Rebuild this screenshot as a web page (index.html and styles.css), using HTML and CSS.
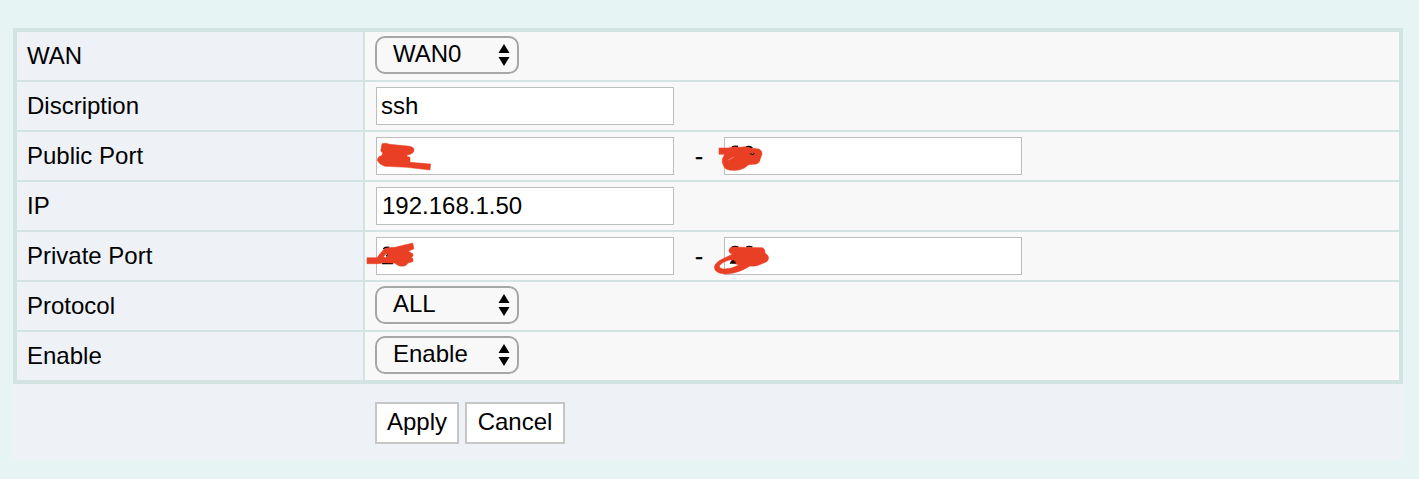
FILE: index.html
```html
<!DOCTYPE html>
<html lang="en">
<head>
<meta charset="utf-8">
<title>Port Forwarding</title>
<link rel="stylesheet" href="styles.css">
</head>
<body>
<form class="panel">
  <div class="grid">
    <div class="label">WAN</div>
    <div class="value"><button type="button" class="select">WAN0<svg class="arrows" width="12" height="22" viewBox="0 0 12 22"><path d="M6 0L11.5 9H.5zM6 22L.5 13h11z"/></svg></button></div>

    <div class="label">Discription</div>
    <div class="value"><div class="field"><input type="text" value="ssh"></div></div>

    <div class="label">Public Port</div>
    <div class="value">
      <div class="field"><input type="text" aria-label="Public port start">
        <svg class="scribble" width="110" height="60" viewBox="0 0 330 180"><path class="ink" d="M66 41Q75 38 90 43L150 49Q163 52 162 62Q158 73 141 75L142 80L150 81V97L212 102L210 120L140 112L75 109Q58 104 52 91Q51 81 66 76L68 68Q60 65 63 57Z"/></svg>
      </div>
      <span class="dash">-</span>
      <div class="field"><input type="text" aria-label="Public port end">
        <svg class="scribble" width="110" height="60" viewBox="0 0 330 180"><path class="dark" d="M126 51Q134 47 144 50M168 51Q178 48 187 54"/><path class="ink" d="M87 54H115Q133 48 150 52Q168 47 180 54L207 57Q217 62 216 73L211 86Q210 98 199 102L176 104L163 114Q147 123 127 121Q106 121 101 108Q94 97 97 87L104 73H87Z"/><path class="dark-fill" d="M178 71L188 69L194 71L187 76Z"/><path class="glint" d="M184 72L189 70M115 90L132 81"/></svg>
      </div>
    </div>

    <div class="label">IP</div>
    <div class="value"><div class="field"><input type="text" class="address" value="192.168.1.50"></div></div>

    <div class="label">Private Port</div>
    <div class="value">
      <div class="field"><input type="text" aria-label="Private port start">
        <svg class="scribble" width="110" height="60" viewBox="0 0 330 180"><path class="dark" d="M70 57Q76 50 88 53M66 100H99"/><path class="ink" d="M21 83H51L66 64Q73 54 84 53L105 52L158 39L162 56L145 64L158 71Q162 77 155 82Q162 88 158 95L144 99Q139 109 126 109Q113 109 106 100L70 98L58 101H21Z"/><path class="hole" d="M71 81L79 71L84 75L78 82Z"/><path class="dark-fill" d="M77 77L82 71L84 75L79 80Z"/></svg>
      </div>
      <span class="dash">-</span>
      <div class="field"><input type="text" aria-label="Private port end">
        <svg class="scribble" width="110" height="60" viewBox="0 0 330 180"><path class="dark" d="M126 51Q135 48 145 51M169 51Q178 48 187 51"/><path class="ink" fill-rule="evenodd" d="M123 51L218 53Q226 57 225 68L234 77Q239 88 230 95L207 105Q194 110 180 108Q153 125 127 130Q94 136 79 124Q69 115 76 103Q85 91 105 83L127 73Q113 68 118 57ZM122 89Q94 96 88 108Q89 117 103 117Q126 116 147 105L136 101Z"/><path class="dark-fill" d="M119 101L122 94L130 90L137 96V101Z"/></svg>
      </div>
    </div>

    <div class="label">Protocol</div>
    <div class="value"><button type="button" class="select">ALL<svg class="arrows" width="12" height="22" viewBox="0 0 12 22"><path d="M6 0L11.5 9H.5zM6 22L.5 13h11z"/></svg></button></div>

    <div class="label">Enable</div>
    <div class="value"><button type="button" class="select">Enable<svg class="arrows" width="12" height="22" viewBox="0 0 12 22"><path d="M6 0L11.5 9H.5zM6 22L.5 13h11z"/></svg></button></div>
  </div>
  <div class="actions">
    <button type="button" class="btn apply">Apply</button>
    <button type="button" class="btn cancel">Cancel</button>
  </div>
</form>
</body>
</html>
```
FILE: styles.css
```css
* { box-sizing: border-box; }
body {
  margin: 0;
  padding: 28px 16px 0 13px;
  height: 479px;
  overflow: hidden;
  background: #e6f4f4;
  color: #000;
  font: 24px/28px "Liberation Sans", Arial, sans-serif;
}
button, input { font: inherit; color: inherit; margin: 0; }
.panel { margin: 0; background: #eef1f6; }
.grid {
  display: grid;
  grid-template-columns: 346px 1fr;
  grid-auto-rows: 48px;
  gap: 2px;
  border: 4px solid #d2e4e2;
  background: #d2e4e2;
}
.label {
  display: flex;
  align-items: center;
  padding-left: 10px;
  background: #eef1f6;
}
.value {
  display: flex;
  align-items: center;
  padding-left: 10px;
  background: #f8f8f8;
}
.select {
  display: flex;
  align-items: center;
  justify-content: space-between;
  width: 144px;
  height: 38px;
  margin-bottom: 2px;
  padding: 0 7px 2px 16px;
  border: 2px solid #a6a6a6;
  border-radius: 10px;
  background: #f8f8f8;
}
.arrows { display: block; margin-top: 1px; }
.field {
  position: relative;
  width: 298px;
  height: 38px;
  margin-left: 1px;
}
.field input {
  display: block;
  width: 100%;
  height: 100%;
  padding: 0 4px;
  border: 1px solid #bdbdbd;
  border-radius: 0;
  background: #fff;
}
.field .address { padding-left: 5px; }
.dash { width: 49px; padding-left: 21px; -webkit-text-stroke: 0.4px #000; }
.scribble {
  position: absolute;
  left: -16px;
  top: -7px;
  pointer-events: none;
}
.dash + .field .scribble { left: -34px; }
.ink { fill: #e94025; stroke: #e94025; stroke-width: 1.5; stroke-linejoin: round; }
.dark { fill: none; stroke: #000; stroke-width: 5; }
.dark-fill { fill: #100; }
.hole { fill: #fff; }
.glint { fill: none; stroke: #f0a090; stroke-width: 2; }
.actions {
  display: flex;
  gap: 6px;
  height: 76px;
  padding: 18px 0 0 362px;
}
.btn {
  height: 42px;
  padding: 0 0 2px;
  border: 2px solid #c6c6c6;
  background: #fff;
}
.apply { width: 84px; }
.cancel { width: 100px; }
```
